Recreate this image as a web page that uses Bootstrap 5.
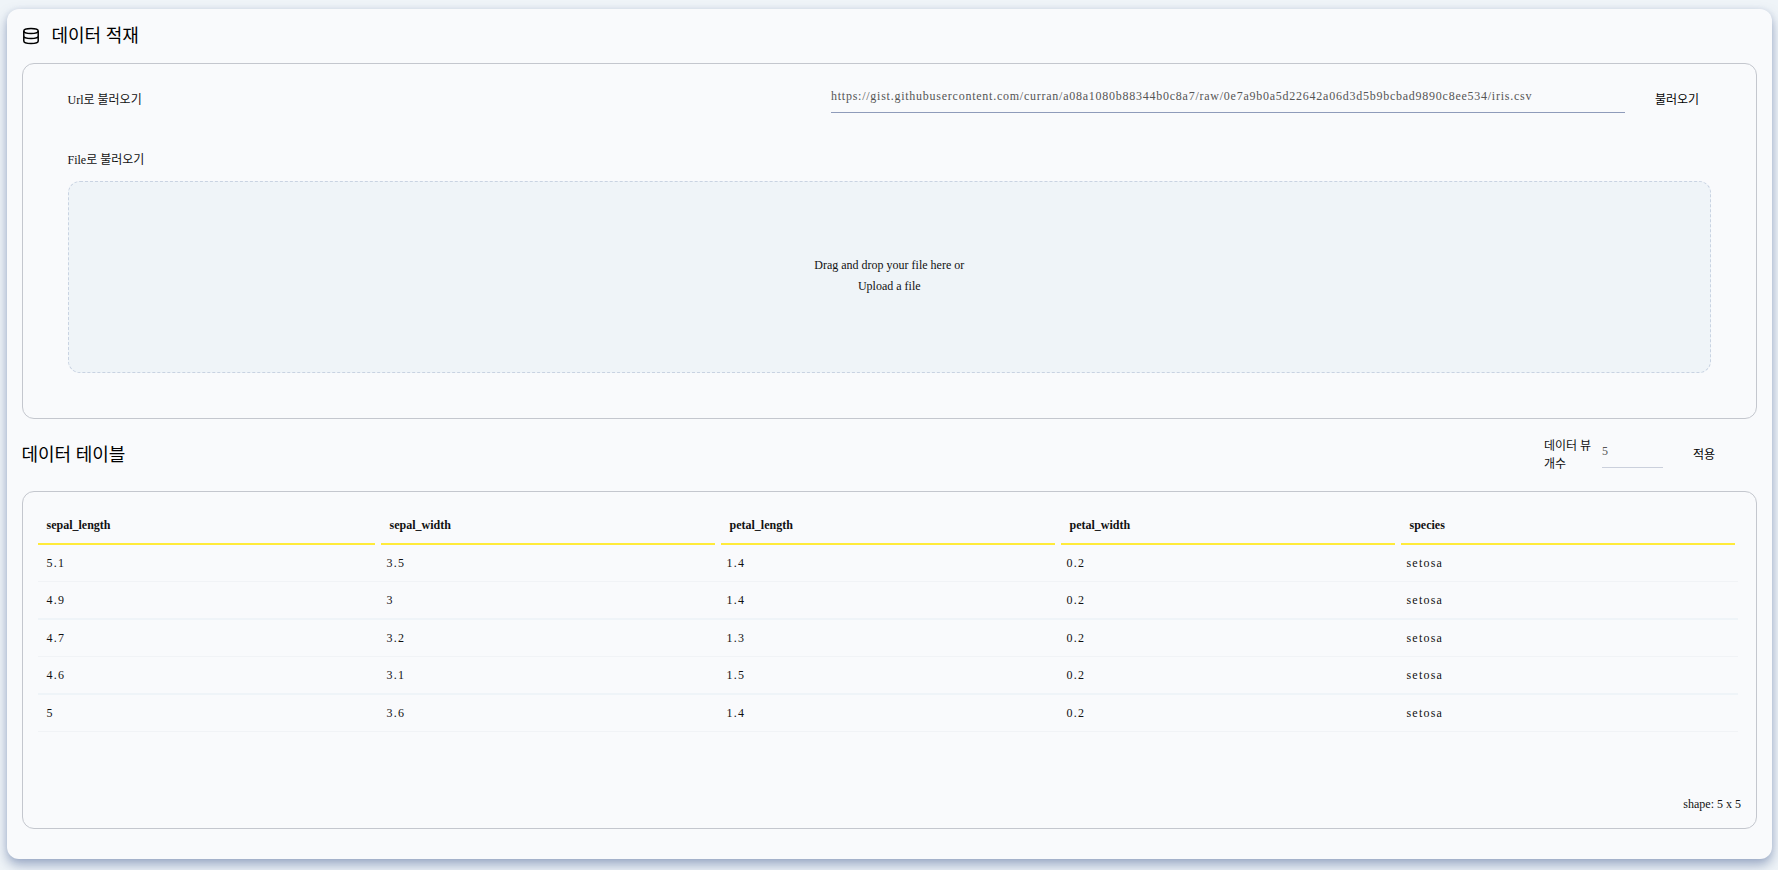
<!DOCTYPE html>
<html lang="ko">
<head>
<meta charset="utf-8">
<title>데이터 적재</title>
<link href="https://cdn.jsdelivr.net/npm/bootstrap@5.3.0/dist/css/bootstrap.min.css" rel="stylesheet">
<style>
body{background:#eff4f8;font-family:"Liberation Serif","Noto Sans CJK KR",serif;font-size:12px;line-height:18px;color:#111;height:870px;overflow:hidden;padding:9px 6px 0 7px}
.panel{height:850px;background:#f9fafc;border-radius:12px;padding:0 15px;box-shadow:0 6px 12px rgba(76,99,150,.5),0 0 5px rgba(76,99,150,.1)}
.title-text{font-size:18px;line-height:26px;color:#000;font-weight:400;position:relative;left:-.5px}
.head-row{height:54px}
.frame{border:1px solid #c4c7ce;border-radius:12px}
.load-frame{height:356px;padding:20px 45px 0 44.5px}
.line-input{border:0;border-bottom:1px solid #8f9bba;border-radius:0;background:transparent;padding:0;outline:0;color:#555;font-size:12px;font-family:inherit}
.url-input{width:794px;height:29px;letter-spacing:.75px;margin-right:30px;padding-bottom:3px}
.url-btn{width:56px;text-align:left}
.url-label,.url-btn{padding-top:7px}
.plain-btn{border:0;background:transparent;color:#000}
.file-block{padding-top:38px}
.drop-area{height:192px;border:1px dashed #c9d3e2;border-radius:12px;background:#eff4f8;line-height:21px;margin-top:12px;padding-bottom:3px}
.mid-row{height:72px}
.rows-label{width:58px}
.rows-input{width:61px;height:29px;border-bottom-color:#cbd0dc;padding-bottom:3px;margin-right:30px;margin-top:-4px}
.apply-btn{width:64px;padding:0;text-align:left}
.table-frame{height:338px;padding:14px 15px 0}
.iris{width:1700px;table-layout:fixed;border-collapse:separate;border-spacing:0;margin:0}
.iris th{height:39px;padding:0 3px}
.iris th:first-child{padding-left:0}
.iris th>div{height:39px;padding:10px 8.5px 0;border-bottom:2px solid #ffeb3b}
.iris td{height:37px;padding:0 8.5px 1px;letter-spacing:1.2px;border-bottom:1px solid #f1f3f6}
.iris tbody tr:nth-child(even) td{height:38px;border-bottom:2px solid #eff4f8}
.shape-note{margin-bottom:15px}
</style>
<script src="https://cdn.jsdelivr.net/npm/bootstrap@5.3.0/dist/js/bootstrap.bundle.min.js"></script>
</head>
<body>
<main class="panel">
  <header class="head-row d-flex align-items-center">
    <svg width="18" height="18" viewBox="0 0 18 18" fill="none" stroke="#000" stroke-width="1.5"><ellipse cx="9" cy="4" rx="7.2" ry="2.5"/><path d="M1.8 4v10c0 1.4 3.2 2.5 7.2 2.5s7.2-1.1 7.2-2.5V4M1.8 9c0 1.4 3.2 2.5 7.2 2.5s7.2-1.1 7.2-2.5"/></svg>
    <h1 class="title-text mb-0 ms-2 ps-1">데이터 적재</h1>
  </header>
  <section class="frame load-frame">
    <div class="d-flex align-items-start">
      <span class="me-auto url-label">Url로 불러오기</span>
      <input class="line-input url-input" value="https://gist.githubusercontent.com/curran/a08a1080b88344b0c8a7/raw/0e7a9b0a5d22642a06d3d5b9bcbad9890c8ee534/iris.csv">
      <button class="plain-btn url-btn px-0 pb-0">불러오기</button>
    </div>
    <div class="file-block"><div>File로 불러오기</div>
      <div class="drop-area d-flex flex-column align-items-center justify-content-center"><span>Drag and drop your file here or</span><span>Upload a file</span></div>
    </div>
  </section>
  <div class="mid-row d-flex align-items-center">
    <h2 class="title-text mb-0 me-auto">데이터 테이블</h2>
    <label for="rows" class="rows-label">데이터 뷰 개수</label>
    <input id="rows" class="line-input rows-input" value="5">
    <button class="plain-btn apply-btn">적용</button>
  </div>
  <section class="frame table-frame d-flex flex-column">
    <table class="iris">
      <thead><tr><th><div>sepal_length</div></th><th><div>sepal_width</div></th><th><div>petal_length</div></th><th><div>petal_width</div></th><th><div>species</div></th></tr></thead>
      <tbody>
        <tr><td>5.1</td><td>3.5</td><td>1.4</td><td>0.2</td><td>setosa</td></tr>
        <tr><td>4.9</td><td>3</td><td>1.4</td><td>0.2</td><td>setosa</td></tr>
        <tr><td>4.7</td><td>3.2</td><td>1.3</td><td>0.2</td><td>setosa</td></tr>
        <tr><td>4.6</td><td>3.1</td><td>1.5</td><td>0.2</td><td>setosa</td></tr>
        <tr><td>5</td><td>3.6</td><td>1.4</td><td>0.2</td><td>setosa</td></tr>
      </tbody>
    </table>
    <div class="text-end mt-auto shape-note">shape: 5 x 5</div>
  </section>
</main>
</body>
</html>
